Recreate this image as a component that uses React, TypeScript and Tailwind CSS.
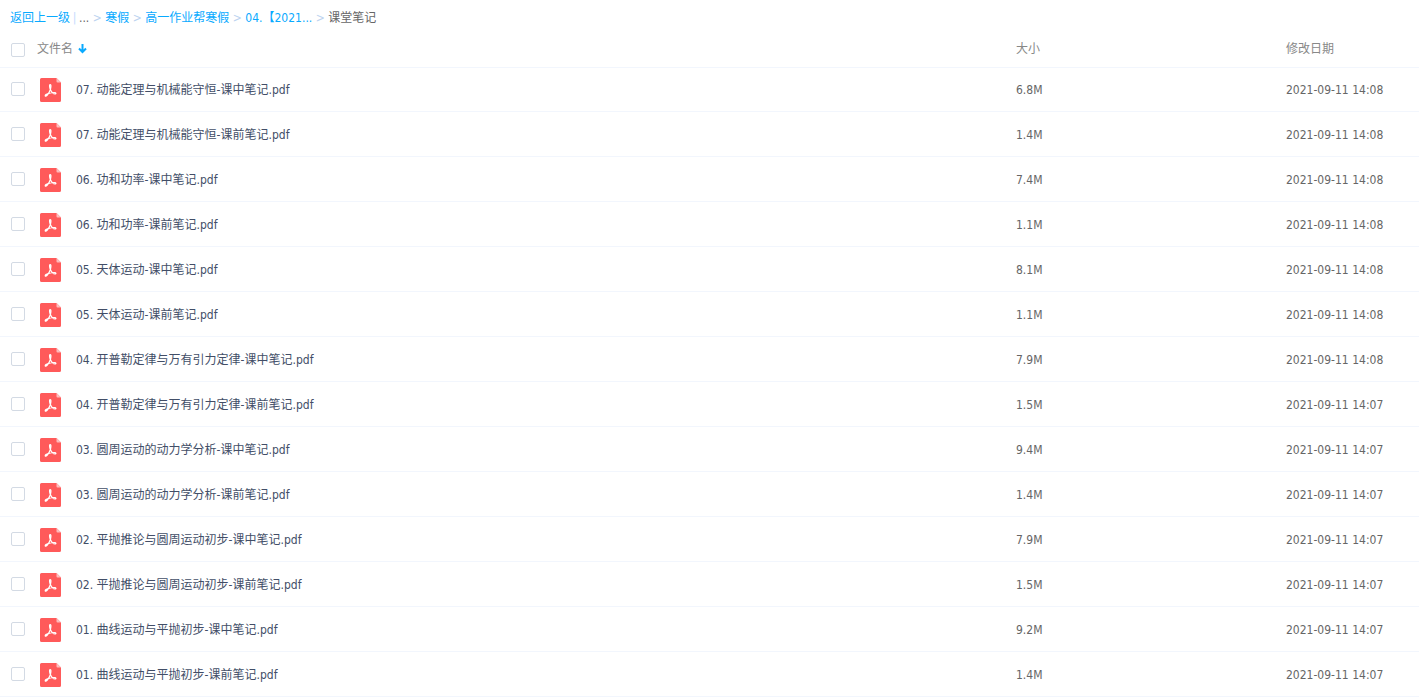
import { Fragment } from 'react';

type FileRow = { name: string; size: string; date: string };

const files: FileRow[] = [
  { name: '07. 动能定理与机械能守恒-课中笔记.pdf', size: '6.8M', date: '2021-09-11 14:08' },
  { name: '07. 动能定理与机械能守恒-课前笔记.pdf', size: '1.4M', date: '2021-09-11 14:08' },
  { name: '06. 功和功率-课中笔记.pdf', size: '7.4M', date: '2021-09-11 14:08' },
  { name: '06. 功和功率-课前笔记.pdf', size: '1.1M', date: '2021-09-11 14:08' },
  { name: '05. 天体运动-课中笔记.pdf', size: '8.1M', date: '2021-09-11 14:08' },
  { name: '05. 天体运动-课前笔记.pdf', size: '1.1M', date: '2021-09-11 14:08' },
  { name: '04. 开普勒定律与万有引力定律-课中笔记.pdf', size: '7.9M', date: '2021-09-11 14:08' },
  { name: '04. 开普勒定律与万有引力定律-课前笔记.pdf', size: '1.5M', date: '2021-09-11 14:07' },
  { name: '03. 圆周运动的动力学分析-课中笔记.pdf', size: '9.4M', date: '2021-09-11 14:07' },
  { name: '03. 圆周运动的动力学分析-课前笔记.pdf', size: '1.4M', date: '2021-09-11 14:07' },
  { name: '02. 平抛推论与圆周运动初步-课中笔记.pdf', size: '7.9M', date: '2021-09-11 14:07' },
  { name: '02. 平抛推论与圆周运动初步-课前笔记.pdf', size: '1.5M', date: '2021-09-11 14:07' },
  { name: '01. 曲线运动与平抛初步-课中笔记.pdf', size: '9.2M', date: '2021-09-11 14:07' },
  { name: '01. 曲线运动与平抛初步-课前笔记.pdf', size: '1.4M', date: '2021-09-11 14:07' },
];

const crumbs = ['寒假', '高一作业帮寒假', '04.【2021...'];

function Checkbox({ label }: { label: string }) {
  return (
    <input
      type="checkbox"
      aria-label={label}
      className="block size-3.5 shrink-0 appearance-none rounded-[2px] border border-[#d3dae4] bg-white checked:border-[#09aaff] checked:bg-[#09aaff]"
    />
  );
}

function PdfIcon() {
  return (
    <svg width="21" height="24" viewBox="0 0 21 24" className="block shrink-0" aria-hidden="true">
      <path d="M1.500 0H16.500L21 4.500V22.500a1.500 1.500 0 0 1-1.500 1.500h-18A1.500 1.500 0 0 1 0 22.500v-21A1.500 1.500 0 0 1 1.500 0Z" fill="#ff5a5a" />
      <path d="M16.500 0L21 4.500h-3.500a1 1 0 0 1-1-1Z" fill="#ffbcbc" />
      <path
        d="M10.400 11.500C9.600 9.700 9.100 6.500 10.200 6.500C11.300 6.500 11 9.700 10.300 11.700C9.500 14 8.400 15.800 7.300 17.200C6.400 18.300 5.200 18.500 5.200 17.700C5.200 16.900 6.900 16 8.700 15.400C10.900 14.700 13 14.400 14.600 14.500C16.300 14.600 16.300 16 15 15.900C13.200 15.800 11.300 13.600 10.400 11.500Z"
        fill="none"
        stroke="#fff"
        strokeWidth="1.2"
        strokeLinejoin="round"
      />
    </svg>
  );
}

function Separator() {
  return <span className="w-4 text-center text-[#bdd3ef]" aria-hidden="true">&gt;</span>;
}

export default function App() {
  return (
    <main className="bg-white font-['DejaVu_Sans_Condensed','Noto_Sans_CJK_SC',sans-serif] text-xs text-[#666]">
      <nav aria-label="路径" className="flex h-9 items-center pl-2.5 text-[#09aaff]">
        <a href="#back">返回上一级</a>
        <span className="w-[9px] text-center text-[#c4dbfe]">|</span>
        <span className="text-[#666]">...</span>
        {crumbs.map((crumb) => (
          <Fragment key={crumb}>
            <Separator />
            <a href="#folder">{crumb}</a>
          </Fragment>
        ))}
        <Separator />
        <span aria-current="page" className="text-[#666]">课堂笔记</span>
      </nav>

      <table className="w-full table-fixed border-separate border-spacing-0 text-left">
        <colgroup>
          <col />
          <col className="w-[270px]" />
          <col className="w-[133px]" />
        </colgroup>
        <thead className="text-[#888]">
          <tr className="h-8 *:border-b *:border-[#f2f6fd] *:p-0 *:pb-1.5 *:font-normal">
            <th>
              <div className="flex items-end pl-[11px]">
                <Checkbox label="全选" />
                <button type="button" className="ml-3 flex items-center gap-[5px]">
                  文件名
                  <svg width="9" height="10" viewBox="0 0 9 10" aria-hidden="true">
                    <path d="M4.500 0V8M1 4.500l3.500 3.500L8 4.500" fill="none" stroke="#09aaff" strokeWidth="2" />
                  </svg>
                </button>
              </div>
            </th>
            <th>大小</th>
            <th>修改日期</th>
          </tr>
        </thead>
        <tbody>
          {files.map((file) => (
            <tr key={file.name} className="h-[45px] *:border-b *:border-[#f2f6fd] *:p-0 *:pt-0.5 first:h-11 first:*:pt-0">
              <td>
                <div className="flex items-start pl-[11px]">
                  <div className="pt-1">
                    <Checkbox label={file.name} />
                  </div>
                  <a href="#file" className="ml-[15px] flex items-center gap-[15px] text-[#424e67]">
                    <PdfIcon />
                    <span>{file.name}</span>
                  </a>
                </div>
              </td>
              <td>{file.size}</td>
              <td>{file.date}</td>
            </tr>
          ))}
        </tbody>
      </table>
    </main>
  );
}
